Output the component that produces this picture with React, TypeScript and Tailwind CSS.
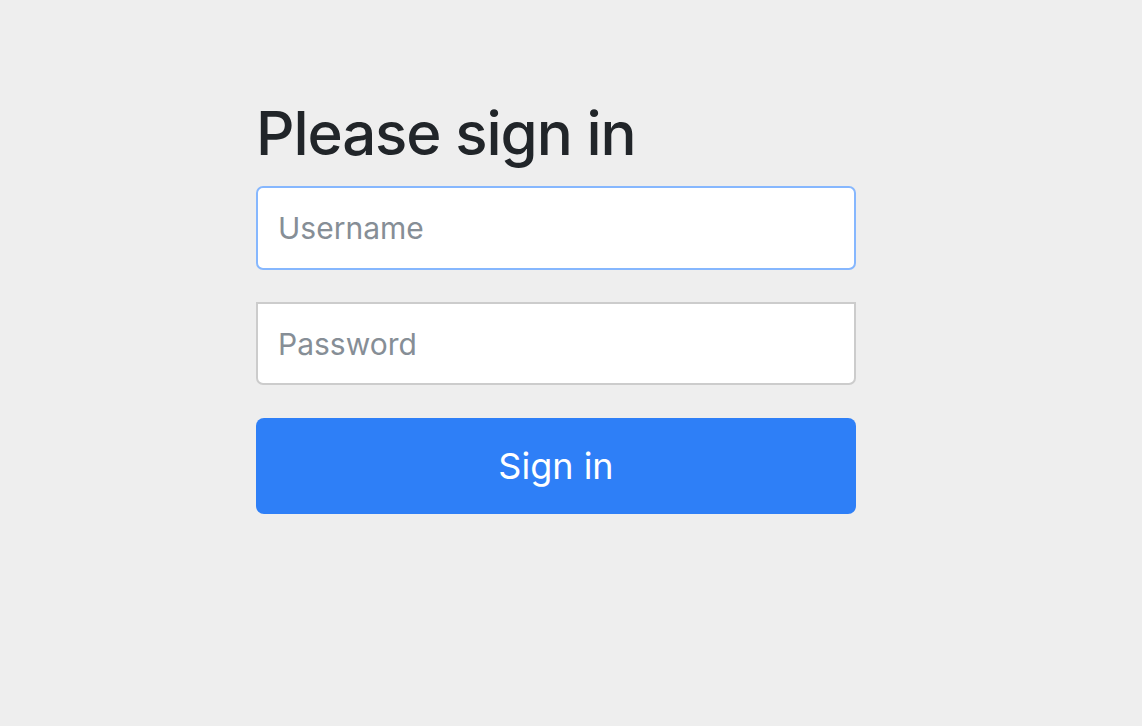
export default function App() {
  return (
    <div className="min-h-[726px] w-full bg-[#eeeeee] font-['Inter',sans-serif]">
      <div className="ml-[256px] w-[600px] pt-[97px]">
        <form onSubmit={(e) => e.preventDefault()}>
          <h2 className="mb-[17px] text-[60px] font-medium leading-[1.2] tracking-[-1.1px] text-[#212529]">
            Please sign in
          </h2>
          <input
            type="text"
            placeholder="Username"
            className="block h-[84px] w-full rounded-[7px] border-2 border-[#86b7fe] bg-white px-[20px] text-[30px] text-[#212529] outline-none placeholder:text-[#868e96]"
          />
          <input
            type="password"
            placeholder="Password"
            className="mt-[32px] block h-[83px] w-full rounded-b-[7px] border-2 border-[#cccccc] bg-white px-[20px] text-[30px] text-[#212529] outline-none placeholder:text-[#868e96]"
          />
          <button
            type="submit"
            className="mt-[33px] block h-[96px] w-full rounded-[8px] bg-[#2e7ff7] text-[36px] text-white"
          >
            Sign in
          </button>
        </form>
      </div>
    </div>
  );
}
